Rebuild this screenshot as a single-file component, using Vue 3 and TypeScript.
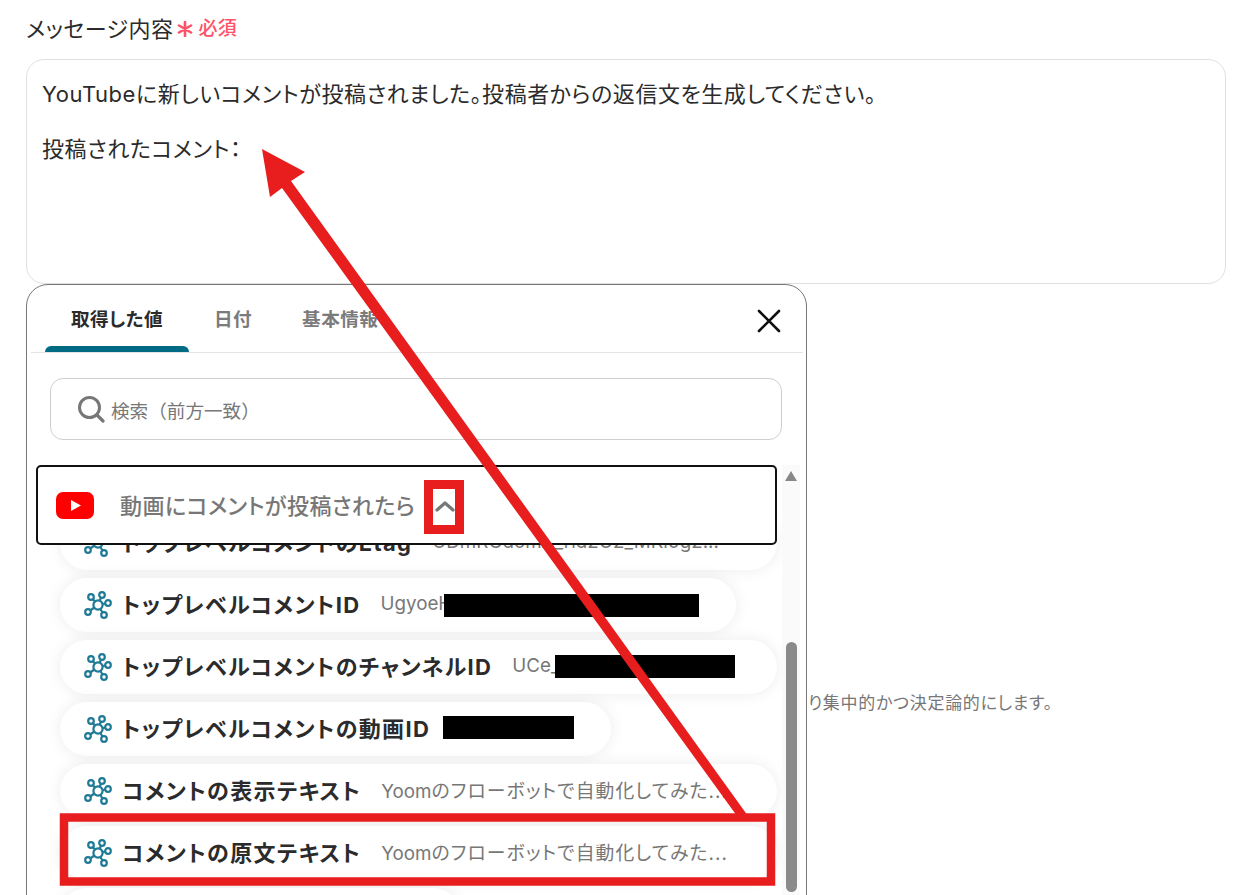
<script setup lang="ts">
interface Row {
  id: number
  title: string
  latin: string
  value: string
  width: number
}

const tabs: string[] = ['取得した値', '日付', '基本情報']

const rows: Row[] = [
  { id: 1, title: 'トップレベルコメントのEtag', latin: 'UDmRGdomA_rid2O2_MKl0g2...', value: '', width: 717 },
  { id: 2, title: 'トップレベルコメントID', latin: 'UgyoeH', value: '', width: 676 },
  { id: 3, title: 'トップレベルコメントのチャンネルID', latin: 'UCe_', value: '', width: 717 },
  { id: 4, title: 'トップレベルコメントの動画ID', latin: '', value: '', width: 551 },
  { id: 5, title: 'コメントの表示テキスト', latin: 'Yoom', value: 'のフローボットで自動化してみた...', width: 717 },
  { id: 6, title: 'コメントの原文テキスト', latin: 'Yoom', value: 'のフローボットで自動化してみた...', width: 717 },
  { id: 7, title: '', latin: '', value: '', width: 400 }
]

const nodes: [number, number][] = [
  [4, -10],
  [-7, -8],
  [10, -2],
  [6, 10],
  [-10, 7]
]
</script>

<template>
  <div class="page">
    <div class="field-label">
      <span class="label-text">メッセージ内容</span>
      <svg class="star" viewBox="-8 -8 16 16" width="16" height="16">
        <path d="M0 -7 V7 M-6 -3.5 L6 3.5 M-6 3.5 L6 -3.5" stroke="#ff5268" stroke-width="2.6" stroke-linecap="round" />
      </svg>
      <span class="required">必須</span>
    </div>
    <div class="message-box">
      <p>YouTubeに新しいコメントが投稿されました。投稿者からの返信文を生成してください。</p>
      <p class="blank">&nbsp;</p>
      <p>投稿されたコメント：</p>
    </div>
    <p class="hint">り集中的かつ決定論的にします。</p>

    <section class="popup">
      <div class="tabs">
        <button v-for="(tab, i) in tabs" :key="tab" class="tab" :class="{ active: i === 0 }">{{ tab }}</button>
        <svg class="close" viewBox="0 0 24 24" width="24" height="24">
          <path d="M2 2 L22 22 M22 2 L2 22" fill="none" stroke="#111" stroke-width="2.6" stroke-linecap="round" />
        </svg>
      </div>
      <div class="search">
        <svg viewBox="0 0 28 28" width="28" height="28">
          <circle cx="12.5" cy="12.5" r="10" fill="none" stroke="#777" stroke-width="3" />
          <path d="M20 20 L26 26" stroke="#777" stroke-width="3.2" stroke-linecap="round" />
        </svg>
        <span>検索（前方一致）</span>
      </div>
      <div class="list-area">
        <div class="group-head">
          <svg viewBox="0 0 38 27" width="38" height="27">
            <rect width="38" height="27" rx="7" fill="#f00" />
            <path d="M15 8 L25 13.5 L15 19 Z" fill="#fff" />
          </svg>
          <span class="group-title">動画にコメントが投稿されたら</span>
          <svg class="chevron" viewBox="0 0 20 12" width="20" height="12">
            <path d="M2 10 L10 3 L18 10" fill="none" stroke="#777" stroke-width="3.2" stroke-linecap="round" stroke-linejoin="round" />
          </svg>
        </div>
        <div class="rows">
          <div v-for="row in rows" :key="row.id" class="row" :style="{ width: row.width + 'px' }">
            <svg class="hub" viewBox="-14 -14 28 28" width="28" height="28">
              <g fill="none" stroke="#1f7a96" stroke-width="2.2">
                <path v-for="n in nodes" :key="n.join()" :d="`M0 0 L${n[0]} ${n[1]}`" />
                <circle r="4.6" fill="#fff" />
                <circle v-for="n in nodes" :key="'c' + n.join()" :cx="n[0]" :cy="n[1]" r="2.8" fill="#fff" />
              </g>
            </svg>
            <span class="row-title">{{ row.title }}</span>
            <span class="row-value"><span class="latin">{{ row.latin }}</span>{{ row.value }}</span>
          </div>
        </div>
        <div class="scroll-track">
          <span class="scroll-up"></span>
          <span class="scroll-thumb"></span>
        </div>
      </div>
    </section>

    <svg class="annotations" viewBox="0 0 1248 895" width="1248" height="895">
      <rect x="444" y="594" width="255" height="23" fill="#000" />
      <rect x="555" y="655" width="180" height="23" fill="#000" />
      <rect x="443" y="716" width="131" height="23" fill="#000" />
      <polygon points="262,149 305,172 291,181 748,816 737,816 282,188 270,197" fill="#e81e1e" />
      <rect x="428.5" y="484.5" width="31" height="45" fill="none" stroke="#e81e1e" stroke-width="9" />
      <rect x="64" y="817.5" width="707" height="64" fill="none" stroke="#e81e1e" stroke-width="8.5" />
    </svg>
  </div>
</template>

<style scoped>
.page {
  position: relative;
  width: 1248px;
  height: 895px;
  overflow: hidden;
  background: #fff;
  box-sizing: border-box;
  padding: 0 22px 0 26px;
  font-family: Inter, "Noto Sans CJK JP", sans-serif;
  font-feature-settings: "palt";
  color: #2b2b2b;
}
p {
  margin: 0;
}
.field-label {
  height: 59px;
  display: flex;
  align-items: center;
  padding-bottom: 6px;
  box-sizing: border-box;
}
.label-text {
  font-size: 22px;
  letter-spacing: 0.45px;
}
.star {
  margin: 5px 0 0 4px;
}
.required {
  margin-left: 5px;
  font-size: 19px;
  font-weight: 500;
  letter-spacing: 0.45px;
  color: #ff5268;
}
.message-box {
  height: 225px;
  box-sizing: border-box;
  border: 1px solid #dfdfdf;
  border-radius: 18px;
  padding: 21px 15px;
  font-size: 22px;
  line-height: 27.5px;
  letter-spacing: 0.53px;
}
.hint {
  margin-top: 408px;
  padding-left: 782px;
  font-size: 17px;
  line-height: 22px;
  letter-spacing: 0.7px;
  color: #777;
}
.popup {
  position: absolute;
  z-index: 1;
  left: 26px;
  top: 284px;
  width: 781px;
  height: 660px;
  box-sizing: border-box;
  background: #fff;
  border: 1px solid #777;
  border-radius: 22px;
  overflow: hidden;
}
.tabs {
  display: flex;
  align-items: stretch;
  height: 67px;
  margin: 0 3px 0 4px;
  padding-left: 14px;
  border-bottom: 1px solid #e4e4e4;
}
.tab {
  position: relative;
  border: 0;
  background: none;
  padding: 0 25px 3px;
  font: inherit;
  font-size: 18.6px;
  font-weight: 700;
  letter-spacing: 0.45px;
  color: #7b7b7b;
}
.tab.active {
  color: #2b2b2b;
  width: 144px;
  padding: 0 0 3px;
}
.tab.active::after {
  content: "";
  position: absolute;
  left: 0;
  right: 0;
  bottom: 0;
  height: 6px;
  background: #006b83;
  border-radius: 6px 6px 0 0;
}
.close {
  margin: 24px 22px 0 auto;
}
.search {
  display: flex;
  align-items: center;
  gap: 6px;
  height: 62px;
  width: 732px;
  box-sizing: border-box;
  margin: 25px 0 0 23px;
  padding-left: 26px;
  border: 1px solid #cfcfcf;
  border-radius: 13px;
  font-size: 18.6px;
  font-feature-settings: normal;
  color: #777;
}
.list-area {
  position: relative;
  margin-top: 25px;
}
.group-head {
  position: absolute;
  z-index: 2;
  left: 9px;
  top: 0;
  width: 741px;
  height: 80px;
  box-sizing: border-box;
  display: flex;
  align-items: center;
  padding: 0 0 0 18px;
  background: #fff;
  border: 2px solid #111;
  border-radius: 5px;
}
.group-title {
  margin-left: 26px;
  padding-bottom: 3px;
  font-size: 22px;
  font-weight: 500;
  letter-spacing: 0.45px;
  color: #777;
}
.chevron {
  margin: 2px 0 0 20px;
}
.rows {
  display: flex;
  flex-direction: column;
  gap: 8px;
  padding: 51px 0 0 33px;
}
.row {
  height: 54px;
  flex: none;
  box-sizing: border-box;
  display: flex;
  align-items: center;
  padding-left: 24px;
  background: #fff;
  border-radius: 27px;
  box-shadow: 0 0 16px rgba(0, 0, 0, 0.08);
}
.hub {
  flex: none;
}
.row-title {
  margin-left: 10px;
  padding-bottom: 5px;
  font-size: 22px;
  font-weight: 700;
  letter-spacing: 1.35px;
  white-space: nowrap;
}
.row-value {
  margin-left: 20px;
  padding-bottom: 4px;
  font-size: 18.8px;
  letter-spacing: 1.1px;
  color: #777;
  white-space: nowrap;
}
.latin {
  letter-spacing: 0;
}
.scroll-track {
  position: absolute;
  left: 755px;
  top: 0;
  width: 18px;
  height: 440px;
  background: #fafafa;
}
.scroll-up {
  position: absolute;
  left: 3px;
  top: 6px;
  width: 0;
  height: 0;
  border-left: 6.5px solid transparent;
  border-right: 6.5px solid transparent;
  border-bottom: 10px solid #888;
}
.scroll-thumb {
  position: absolute;
  left: 4px;
  top: 177px;
  width: 11px;
  height: 250px;
  background: #8a8a8a;
  border-radius: 6px;
}
.annotations {
  position: absolute;
  z-index: 3;
  left: 0;
  top: 0;
  pointer-events: none;
}
</style>

<style>
html,
body {
  margin: 0;
  overflow: hidden;
}
</style>
